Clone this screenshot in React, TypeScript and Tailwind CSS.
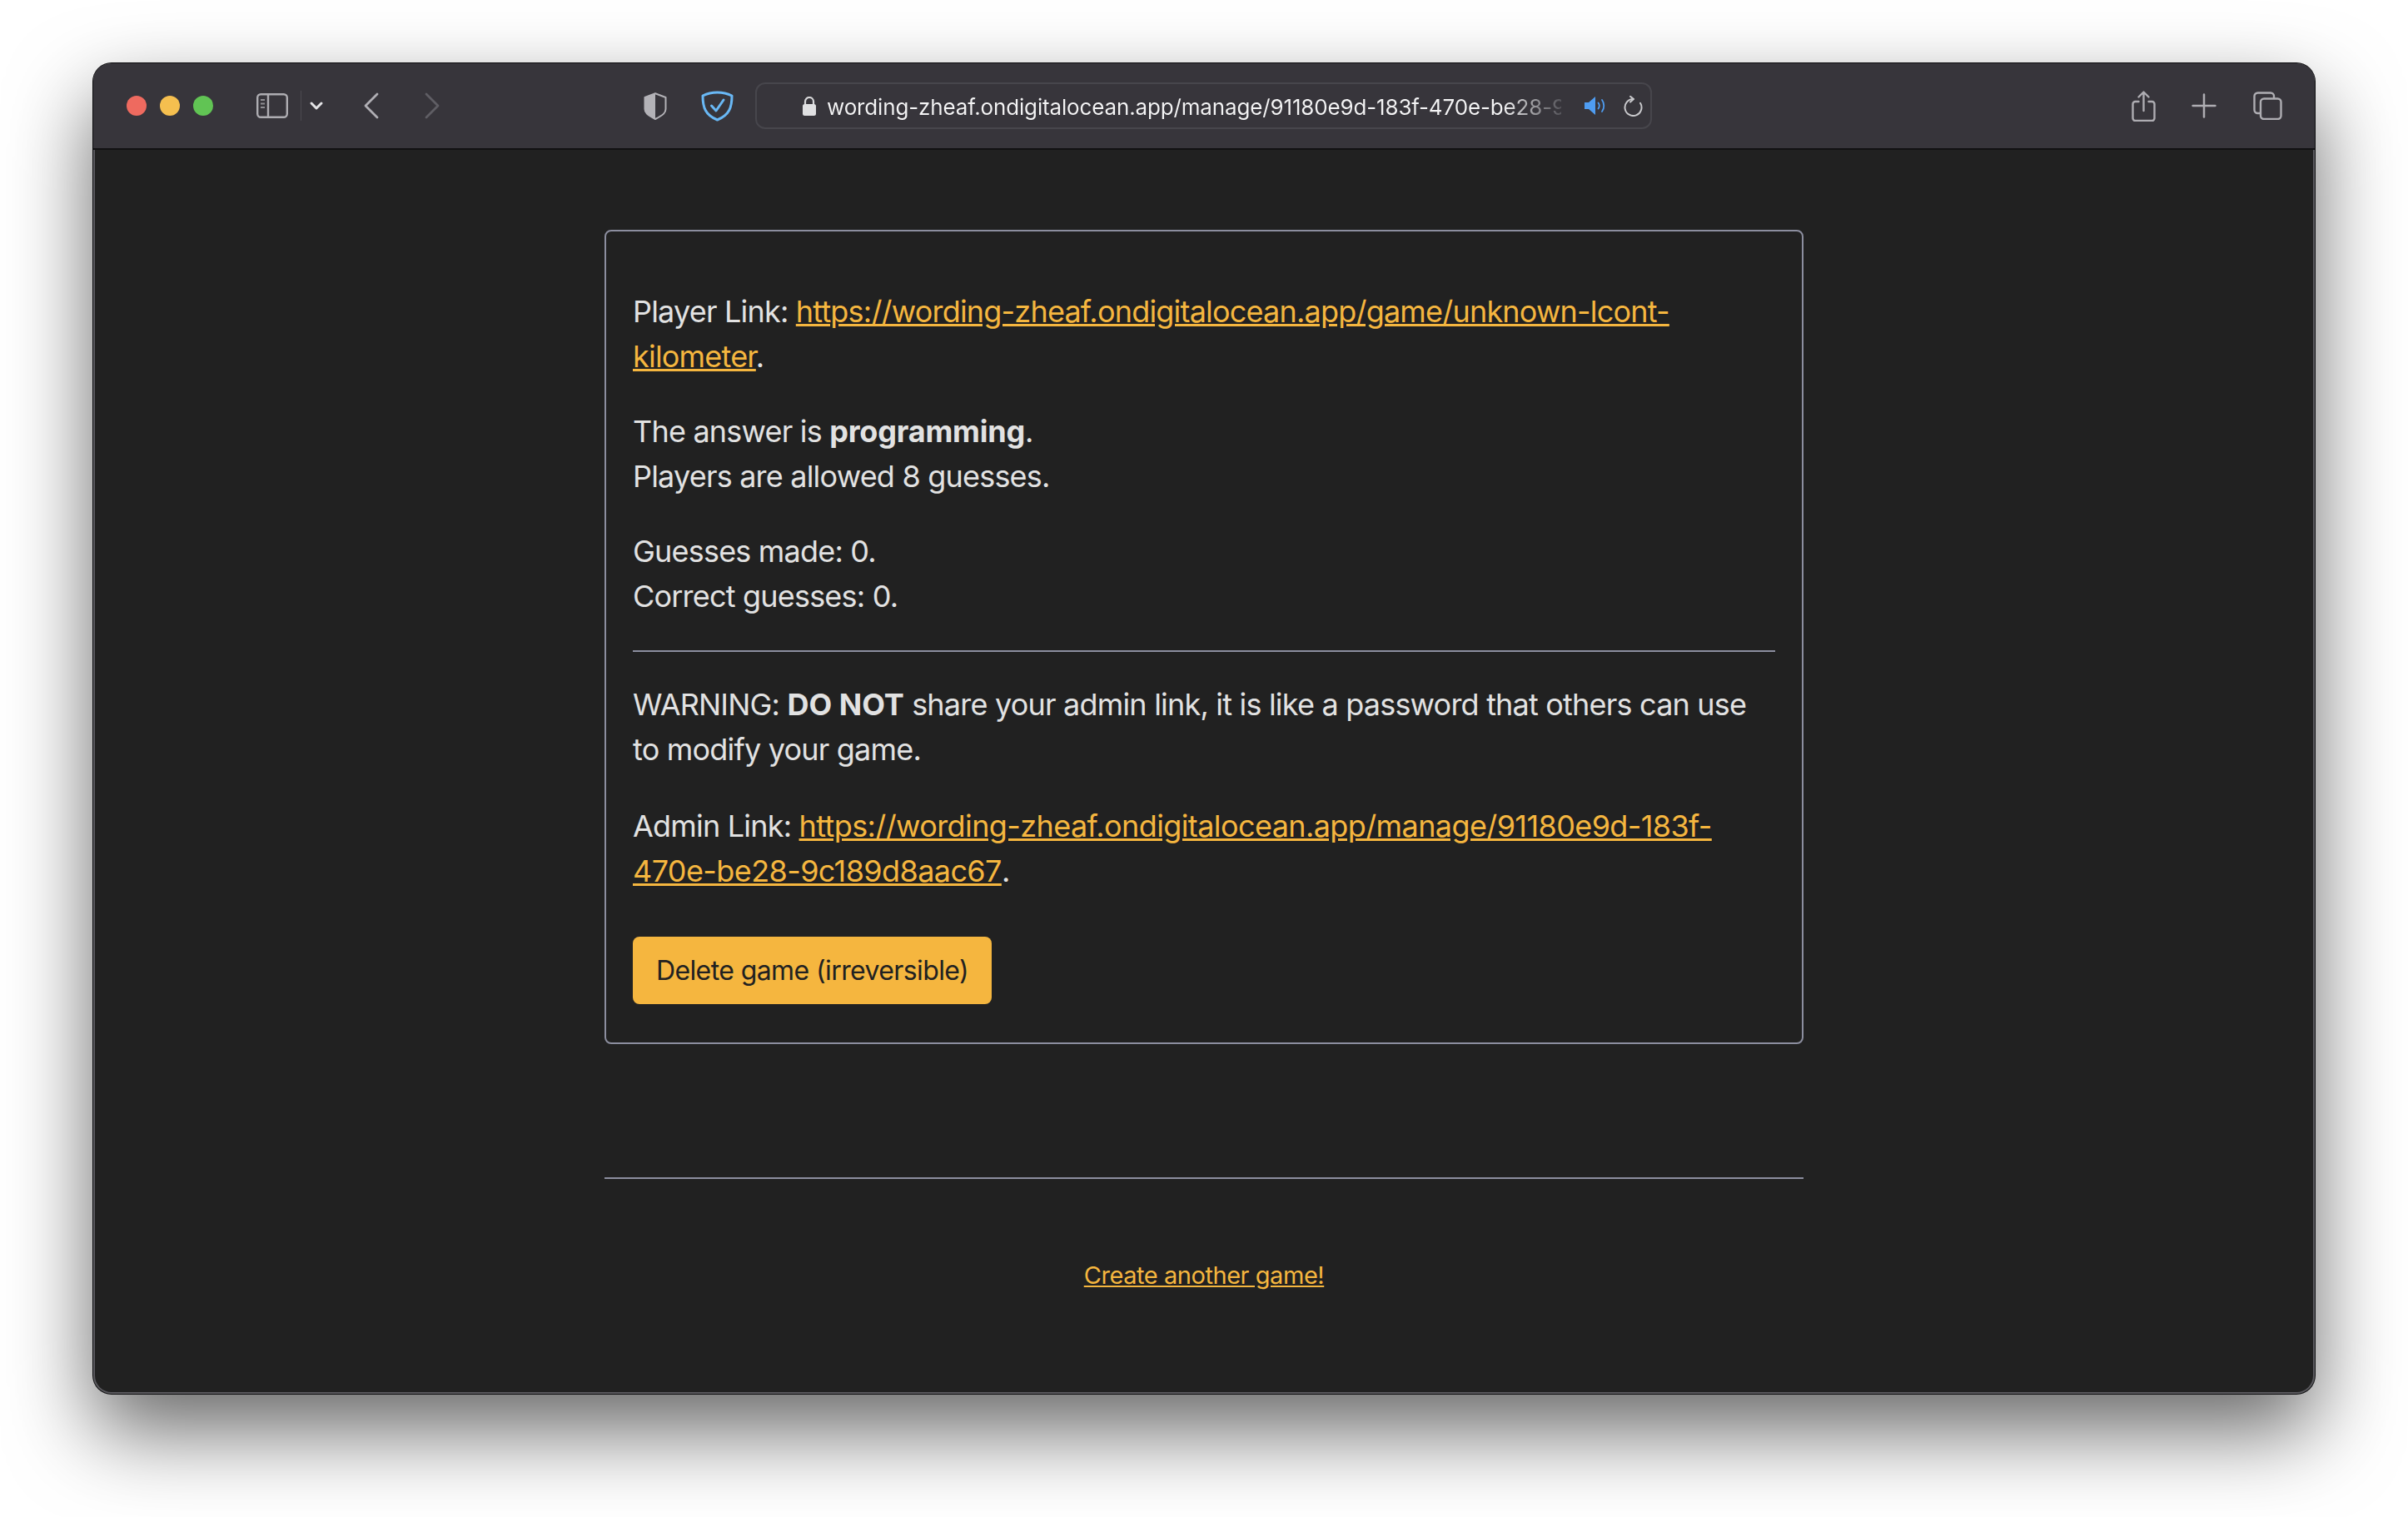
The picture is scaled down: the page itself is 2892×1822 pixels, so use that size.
import { ChevronDown, ChevronLeft, ChevronRight, Plus } from 'lucide-react'

const font = { fontFamily: 'Inter, "Liberation Sans", sans-serif' }

function SidebarIcon() {
  return (
    <svg width="38" height="30" viewBox="0 0 38 30" fill="none" stroke="#aeadb2" strokeWidth="2.4">
      <rect x="1.2" y="1.2" width="35.6" height="27.6" rx="4" />
      <path d="M14 1.2v27.6" />
      <path d="M5 8h5M5 12.5h5M5 17h5" strokeWidth="2" stroke="#8f8e93" />
    </svg>
  )
}

function HalfShield() {
  return (
    <svg width="28" height="33" viewBox="0 0 28 33" fill="none">
      <path d="M14 1.2 26.5 6v14c0 4-2.5 7-12.5 12C4 27 1.5 24 1.5 20V6z" stroke="#b3b2b7" strokeWidth="2" strokeLinejoin="round" />
      <path d="M14 1.2V32C4 27 1.5 24 1.5 20V6z" fill="#b3b2b7" />
    </svg>
  )
}

function BlueShield() {
  return (
    <svg width="39" height="37" viewBox="0 0 39 37" fill="none" stroke="#69b8f5" strokeWidth="3" strokeLinecap="round" strokeLinejoin="round">
      <path d="M19.5 2C26 2 32 3.5 37 6c0 14-3 23-17.500 29C5 29 2 20 2 6c5-2.500 11-4 17.500-4z" />
      <path d="m12.500 18 5.500 6 9-13" />
    </svg>
  )
}

function Lock() {
  return (
    <svg width="18" height="23" viewBox="0 0 18 23" fill="none">
      <path d="M4 10V6a5 5 0 0 1 10 0v4" stroke="#d8d8da" strokeWidth="2.2" />
      <rect x="1" y="9" width="16" height="14" rx="2.500" fill="#e0e0e2" />
    </svg>
  )
}

function Speaker() {
  return (
    <svg width="27" height="22" viewBox="0 0 27 22" fill="none">
      <path d="M0 7h5l8-7v22l-8-7H0z" fill="#4f9df2" />
      <path d="M16.500 7.500c1.500 2 1.500 5 0 7M21 4c3 4 3 10 0 14" stroke="#4f9df2" strokeWidth="1.800" strokeLinecap="round" />
    </svg>
  )
}

function Reload() {
  return (
    <svg width="23" height="25" viewBox="0 0 23 25" fill="none" stroke="#c9c9cc" strokeWidth="2" strokeLinecap="round" strokeLinejoin="round">
      <path d="M11.500 4A10 10 0 1 0 20 8.730" />
      <path d="M8 .8 12 4 8 7.500" />
    </svg>
  )
}

function ShareIcon() {
  return (
    <svg width="29" height="37" viewBox="0 0 29 37" fill="none" stroke="#aeadb2" strokeWidth="2.400" strokeLinecap="round" strokeLinejoin="round">
      <path d="M8.500 13H4.500a3 3 0 0 0-3 3v17a3 3 0 0 0 3 3h20a3 3 0 0 0 3-3V16a3 3 0 0 0-3-3h-4" />
      <path d="M14.500 24V2M8.500 7.500l6-6 6 6" />
    </svg>
  )
}

function TabsIcon() {
  return (
    <svg width="35" height="34" viewBox="0 0 35 34" fill="none" stroke="#aeadb2" strokeWidth="2.400">
      <path d="M8 26H5.500a4 4 0 0 1-4-4V5.500a4 4 0 0 1 4-4H21a4 4 0 0 1 4 4V8" />
      <rect x="9" y="8.500" width="24.500" height="24.500" rx="4" />
    </svg>
  )
}

function Toolbar() {
  return (
    <div className="flex h-[104px] shrink-0 items-center border-b-2 border-[#111113] bg-[#37353b] pl-[40px]">
      <div className="flex gap-4">
        <div className="h-6 w-6 rounded-full bg-[#ee6a5f]" />
        <div className="h-6 w-6 rounded-full bg-[#f5bf4f]" />
        <div className="h-6 w-6 rounded-full bg-[#61c454]" />
      </div>
      <div className="ml-[52px] flex items-center">
        <SidebarIcon />
      </div>
      <div className="ml-[15px] h-9 w-px bg-[#4b4a50]" />
      <ChevronDown className="ml-[6px] h-[24px] w-[24px] text-[#e4e4e6]" strokeWidth={3} />
      <ChevronLeft className="ml-[26px] h-[56px] w-[56px] text-[#b0afb4]" strokeWidth={1.2} />
      <ChevronRight className="ml-[17px] h-[56px] w-[56px] text-[#5f5e64]" strokeWidth={1.2} />
      <div className="ml-[226px] flex items-center">
        <HalfShield />
      </div>
      <div className="ml-[41px] flex items-center">
        <BlueShield />
      </div>
      <div className="ml-[26px] flex h-[56px] w-[1077px] items-center rounded-[12px] border-2 border-[#47464c] pl-[54px]">
        <Lock />
        <span className="ml-[12px] mt-[4px] w-[882px] overflow-hidden whitespace-nowrap bg-gradient-to-r from-[#f4f4f5] from-[92%] to-[#55545a] bg-clip-text text-[26px] leading-[32px] tracking-[-0.15px] text-transparent">
          wording-zheaf.ondigitalocean.app/manage/91180e9d-183f-470e-be28-9c189d8aac67
        </span>
        <div className="ml-[28px] flex">
          <Speaker />
        </div>
        <div className="ml-[20px] flex">
          <Reload />
        </div>
      </div>
      <div className="ml-[576px] flex items-center">
        <ShareIcon />
      </div>
      <Plus className="ml-[35px] h-[46px] w-[46px] text-[#aeadb2]" strokeWidth={1.3} />
      <div className="ml-[36px] flex items-center">
        <TabsIcon />
      </div>
    </div>
  )
}

export default function App() {
  return (
    <div className="h-[1822px] w-[2892px] overflow-hidden bg-white pl-[112px] pt-[76px]" style={font}>
      <div className="flex h-[1598px] w-[2668px] flex-col overflow-hidden rounded-[22px] bg-[#212121] shadow-[0_0_0_1px_#0c0c0e,inset_0_0_0_2px_#5a595e,0_44px_100px_rgba(0,0,0,0.6)]">
        <Toolbar />
        <div className="mx-auto w-[1440px] pt-[96px] text-[36px] leading-[54px] tracking-[-0.8px] text-[#e2e2e2]">
          <div className="rounded-[8px] border-2 border-[#8c8e9f] px-[32px] pb-[46px] pt-[69px]">
            <p className="mb-[36px]">
              Player Link:{' '}
              <a className="text-[#f5b63f] underline" href="#">
                https://wording-zheaf.ondigitalocean.app/game/unknown-lcont-kilometer
              </a>
              .
            </p>
            <p className="mb-[36px]">
              The answer is <strong className="font-bold tracking-[-0.2px]">programming</strong>.<br />
              Players are allowed 8 guesses.
            </p>
            <p className="mb-[38px]">
              Guesses made: 0.
              <br />
              Correct guesses: 0.
            </p>
            <hr className="mb-[36px] border-t-2 border-[#8c8e9f]" />
            <p className="mb-[38px]">
              WARNING: <strong className="font-bold tracking-[0px]">DO NOT</strong> share your admin link, it is like a password that others can use to modify your game.
            </p>
            <p className="mb-[52px]">
              Admin Link:{' '}
              <a className="tracking-[-0.6px] text-[#f5b63f] underline" href="#">
                https://wording-zheaf.ondigitalocean.app/manage/91180e9d-183f-470e-be28-9c189d8aac67
              </a>
              .
            </p>
            <button className="flex h-[81px] w-[431px] items-center justify-center rounded-[8px] bg-[#f5b63f] text-[32px] tracking-[-0.6px] text-[#212121]">
              Delete game (irreversible)
            </button>
          </div>
          <hr className="mt-[160px] border-t-2 border-[#8c8e9f]" />
          <div className="mt-[96px] text-center text-[29px] leading-[40px] tracking-[-0.45px]">
            <a className="text-[#f5b63f] underline" href="#">
              Create another game!
            </a>
          </div>
        </div>
      </div>
    </div>
  )
}
